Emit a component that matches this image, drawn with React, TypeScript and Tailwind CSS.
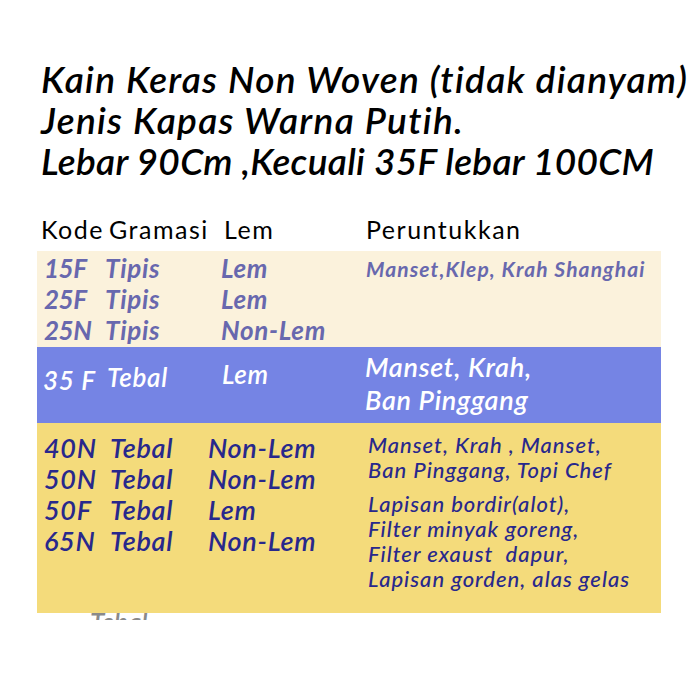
const font = "font-['Lato','Open_Sans',sans-serif]";

const thin = [
  ["15F", "Tipis", "Lem"],
  ["25F", "Tipis", "Lem"],
  ["25N", "Tipis", "Non-Lem"],
];

const thick = [
  ["40N", "Tebal", "Non-Lem"],
  ["50N", "Tebal", "Non-Lem"],
  ["50F", "Tebal", "Lem"],
  ["65N", "Tebal", "Non-Lem"],
];

export default function App() {
  return (
    <div className={`h-[700px] w-[700px] overflow-hidden bg-white ${font}`}>
      <div className="pl-[41px] pt-[58px] text-[37px] font-semibold italic leading-[41px] tracking-[1.3px] text-black">
        <div>Kain Keras Non Woven (tidak dianyam)</div>
        <div>Jenis Kapas Warna Putih.</div>
        <div className="tracking-[0.3px]">Lebar 90Cm ,Kecuali 35F lebar 100CM</div>
      </div>

      <div className="mt-[32px] mb-[6px] flex pl-[41px] text-[25px] leading-[32px] tracking-[1.5px] text-black">
        <span className="w-[68px]">Kode</span>
        <span className="w-[115px]">Gramasi</span>
        <span className="w-[142px]">Lem</span>
        <span>Peruntukkan</span>
      </div>

      <div className="ml-[37px] w-[624px]">
        <div className="grid grid-cols-[61px_116px_145px_1fr] bg-[#fbf2dc] pl-[7px] pt-[2px] pb-[1px] font-bold italic tracking-[0.7px] text-[#6868ae]">
          {thin.map((r, i) => (
            <div key={i} className="contents text-[26px] leading-[31px]">
              <span className="tracking-[-0.5px]">{r[0]}</span>
              <span>{r[1]}</span>
              <span>{r[2]}</span>
              <span className="text-[21px] tracking-[1.1px]">
                {i === 0 ? "Manset,Klep, Krah Shanghai" : ""}
              </span>
            </div>
          ))}
        </div>

        <div className="flex h-[76px] items-start bg-[#7584e4] pl-[6px] font-semibold italic tracking-[0.7px] text-white">
          <span className="mt-[18px] w-[64px] text-[26px] leading-[31px]">35 F</span>
          <span className="mt-[15px] w-[115px] text-[26px] leading-[31px]">Tebal</span>
          <span className="mt-[12px] w-[143px] text-[26px] leading-[31px]">Lem</span>
          <div className="mt-[3px] text-[27px] leading-[33px]">
            <div>Manset, Krah,</div>
            <div>Ban Pinggang</div>
          </div>
        </div>

        <div className="flex h-[190px] bg-[#f4db7b] pl-[7px] pt-[9px] italic text-[#28288c]">
          <div className="grid w-[324px] grid-cols-[66px_98px_1fr] content-start text-[27px] font-semibold leading-[31px] tracking-[0.7px]">
            {thick.map((r, i) => (
              <div key={i} className="contents">
                <span>{r[0]}</span>
                <span>{r[1]}</span>
                <span>{r[2]}</span>
              </div>
            ))}
          </div>
          <div className="text-[22px] font-medium leading-[25px] tracking-[1px]">
            <div>Manset, Krah , Manset,</div>
            <div>Ban Pinggang, Topi Chef</div>
            <div className="mt-[9px]">Lapisan bordir(alot),</div>
            <div>Filter minyak goreng,</div>
            <div>Filter exaust&nbsp; dapur,</div>
            <div>Lapisan gorden, alas gelas</div>
          </div>
        </div>

        <div className="ml-[53px] h-[7px] overflow-hidden">
          <div className="-mt-[4px] text-[26px] font-semibold italic leading-[26px] text-[#8a8a8a]">
            Tebal
          </div>
        </div>
      </div>
    </div>
  );
}
